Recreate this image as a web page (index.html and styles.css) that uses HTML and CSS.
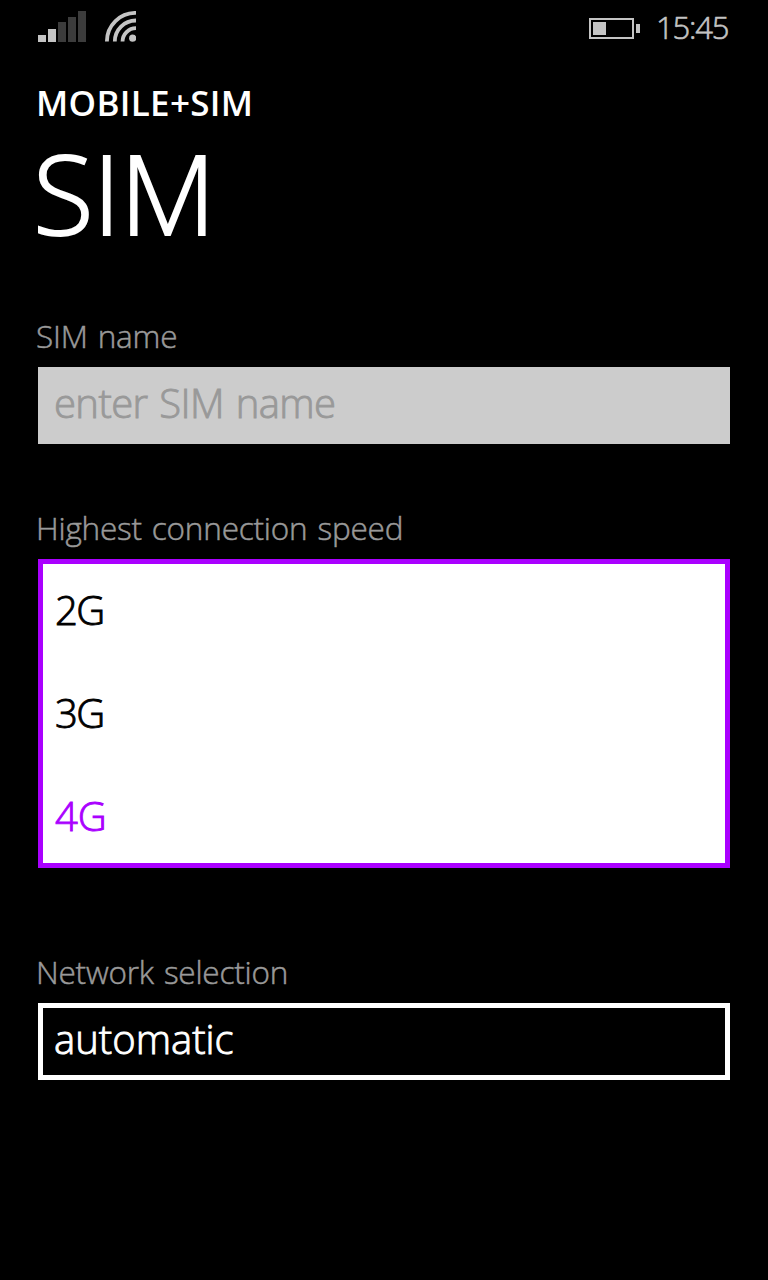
FILE: index.html
```
<!DOCTYPE html>
<html lang="en">
<head>
  <meta charset="UTF-8">
  <title>SIM</title>
  <link rel="stylesheet" href="styles.css">
</head>
<body>
  <header class="status-bar">
    <svg class="signal" width="48" height="31" viewBox="0 0 48 31">
      <path fill="#c4c4c4" d="M0 24h8v7H0zM10 18h8v13h-8z"/>
      <path fill="#3c3c3c" d="M20 11h8v20h-8zM30 6h8v25h-8zM40 0h8v31h-8z"/>
    </svg>
    <svg class="wifi" width="31" height="31" viewBox="0 0 31 31">
      <g fill="none" stroke="#c4c4c4" stroke-width="3.8">
        <path d="M1.9 30.5A28.5 28.5 0 0 1 31 1.9"/>
        <path d="M9.8 30.5A21 21 0 0 1 31 9.5"/>
        <path d="M17.5 30.5A13.5 13.5 0 0 1 31 17.2"/>
      </g>
      <circle cx="27.7" cy="27.2" r="3.6" fill="#c4c4c4"/>
    </svg>
    <svg class="battery" width="51" height="21" viewBox="0 0 51 21">
      <rect x="1" y="1" width="43" height="19" fill="none" stroke="#c4c4c4" stroke-width="2"/>
      <path fill="#c4c4c4" d="M4 4h13v13H4zM47 6h4v9h-4z"/>
    </svg>
    <span class="clock">15:45</span>
  </header>
  <main>
    <div class="app-name">MOBILE+SIM</div>
    <h1>SIM</h1>
    <form>
      <label class="label-name" for="sim_name">SIM name</label>
      <input class="box" type="text" id="sim_name" placeholder="enter SIM name">

      <div class="label label-speed">Highest connection speed</div>
      <ul class="options">
        <li>2G</li>
        <li>3G</li>
        <li class="selected">4G</li>
      </ul>

      <div class="label label-network">Network selection</div>
      <div class="box picker">automatic</div>
    </form>
  </main>
</body>
</html>
```

FILE: styles.css
```
* {
  box-sizing: border-box;
}
body {
  margin: 0;
  background: #000;
  color: #fff;
  font-family: "Open Sans", "Noto Sans", sans-serif;
  font-weight: 300;
  min-height: 1280px;
}
.status-bar {
  display: flex;
  align-items: flex-start;
  height: 83px;
  padding: 0 38px;
  color: #c4c4c4;
}
.signal {
  margin-top: 11px;
}
.wifi {
  margin: 11px 0 0 19px;
}
.battery {
  margin: 18px 0 0 auto;
}
.clock {
  width: 74px;
  margin-left: 16px;
  font-size: 31px;
  line-height: 55px;
  letter-spacing: -1.2px;
  -webkit-text-stroke: 0.6px;
}
main {
  padding: 0 38px;
}
.app-name {
  margin-left: -2px;
  font-size: 35px;
  font-weight: 600;
  line-height: 40px;
  letter-spacing: 0.3px;
}
h1 {
  margin: 9px 0 64px -5px;
  font-size: 111px;
  font-weight: 300;
  line-height: 120px;
  letter-spacing: -0.8px;
  -webkit-text-stroke: 2px;
}
form {
  display: flex;
  flex-direction: column;
}
label,
.label {
  margin: 0 0 11px -2px;
  color: #999;
  font-size: 31.5px;
  line-height: 40px;
  letter-spacing: -0.2px;
  word-spacing: 2px;
  -webkit-text-stroke: 0.5px;
}
.box {
  width: 100%;
  height: 77px;
  font-size: 40px;
  font-weight: 300;
  -webkit-text-stroke: 0.9px;
}
input {
  margin: 0 0 64px;
  padding: 0 16px 7px;
  border: none;
  border-radius: 0;
  background: #ccc;
  font-family: inherit;
  letter-spacing: -0.6px;
  word-spacing: 2px;
}
input::placeholder {
  color: #999;
}
.options {
  display: flex;
  flex-direction: column;
  gap: 11px;
  height: 309px;
  margin: 0 0 84px;
  padding: 0 12px;
  border: 5px solid #a0f;
  background: #fff;
  color: #000;
  font-size: 40px;
  line-height: 92px;
  letter-spacing: -1.6px;
  list-style: none;
  -webkit-text-stroke: 0.9px;
}
.options .selected {
  color: #a0f;
  letter-spacing: 0;
}
.picker {
  padding: 0 11px;
  border: 5px solid #fff;
  line-height: 61px;
}
```
